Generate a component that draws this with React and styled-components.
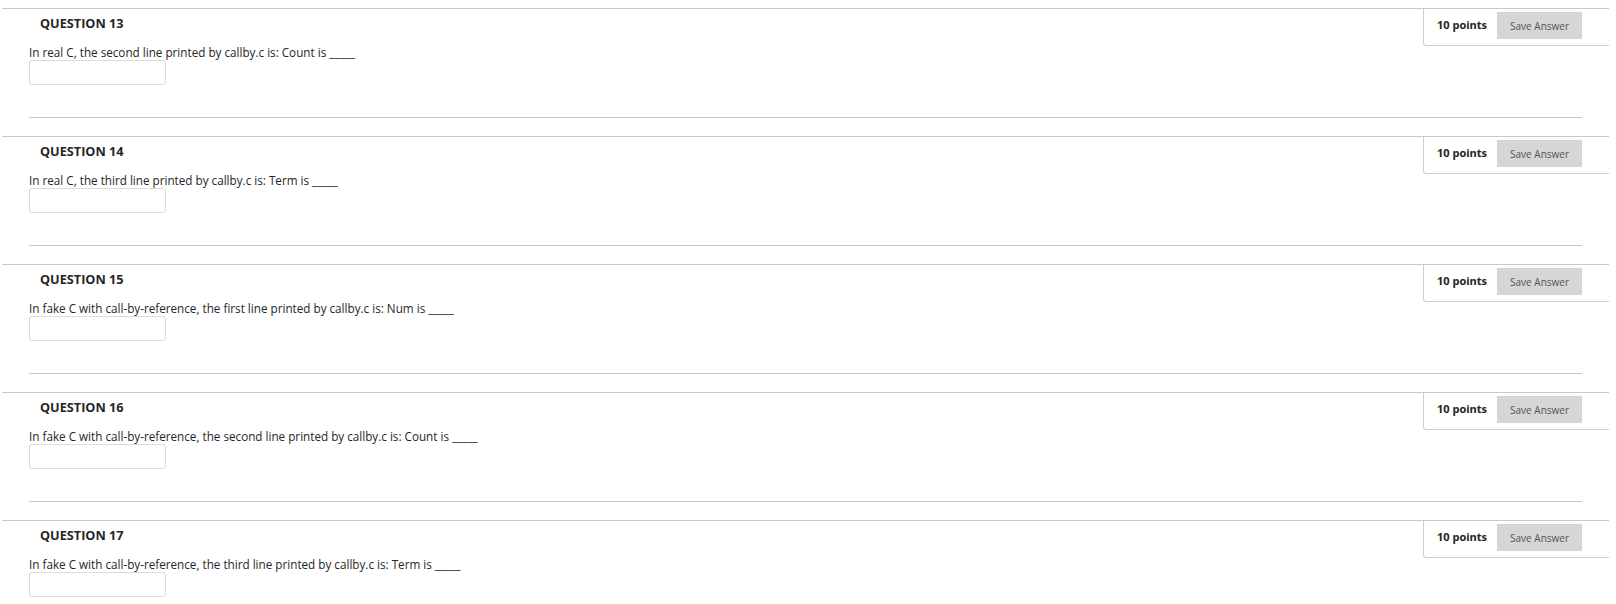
import React from "react";
import styled, { createGlobalStyle } from "styled-components";

const GlobalStyle = createGlobalStyle`
  html, body {
    margin: 0;
    padding: 0;
    background: #fff;
  }
  body {
    font-family: "Open Sans", "Liberation Sans", sans-serif;
    color: #333;
  }
`;

const List = styled.ul`
  list-style: none;
  margin: 0;
  padding: 8px 0 0 2px;
  width: 1607px;
`;

const Item = styled.li`
  border-top: 1px solid #c9c9c9;
  height: 127px;
  overflow: hidden;
`;

const Header = styled.div`
  display: flex;
  justify-content: space-between;
  align-items: flex-start;
`;

const Heading = styled.h3`
  margin: 6px 0 0 38px;
  font-size: 12.7px;
  line-height: 17px;
  font-weight: 700;
  color: #262626;
`;

const PointsBox = styled.div`
  display: flex;
  align-items: center;
  gap: 10px;
  box-sizing: border-box;
  width: 186px;
  height: 37px;
  padding: 3px 27px 6px 13px;
  border-left: 1px solid #cfcfcf;
  border-bottom: 1px solid #cfcfcf;
  border-bottom-left-radius: 3px;
`;

const Points = styled.span`
  font-size: 11px;
  line-height: 14px;
  font-weight: 700;
  color: #222;
  white-space: nowrap;
  margin-top: -1px;
`;

const SaveButton = styled.button`
  width: 85px;
  height: 27px;
  border: none;
  border-radius: 0;
  background: #d6d6d6;
  color: #555;
  font-family: "Open Sans", "Liberation Sans", sans-serif;
  font-size: 10px;
  padding: 0;
  cursor: pointer;
`;

const Body = styled.div`
  margin: 0 27px 0 27px;
  padding-bottom: 32px;
  border-bottom: 1px solid #c9c9c9;
`;

const Prompt = styled.div`
  margin-top: -1px;
  font-size: 11.7px;
  line-height: 14px;
  color: #262626;
  white-space: nowrap;
`;

const AnswerInput = styled.input`
  display: block;
  box-sizing: border-box;
  width: 137px;
  height: 25px;
  margin: 1px 0 0;
  border: 1px solid #dcdcdc;
  border-radius: 3px;
  background: #fff;
  outline: none;
`;

const questions = [
  { n: 13, text: "In real C, the second line printed by callby.c is: Count is _____" },
  { n: 14, text: "In real C, the third line printed by callby.c is: Term is _____" },
  { n: 15, text: "In fake C with call-by-reference, the first line printed by callby.c is: Num is _____" },
  { n: 16, text: "In fake C with call-by-reference, the second line printed by callby.c is: Count is _____" },
  { n: 17, text: "In fake C with call-by-reference, the third line printed by callby.c is: Term is _____" },
];

export default function App() {
  return (
    <>
      <GlobalStyle />
      <List>
        {questions.map((q) => (
          <Item key={q.n}>
            <Header>
              <Heading>QUESTION {q.n}</Heading>
              <PointsBox>
                <Points>10 points</Points>
                <SaveButton>Save Answer</SaveButton>
              </PointsBox>
            </Header>
            <Body>
              <Prompt>{q.text}</Prompt>
              <AnswerInput type="text" />
            </Body>
          </Item>
        ))}
      </List>
    </>
  );
}
